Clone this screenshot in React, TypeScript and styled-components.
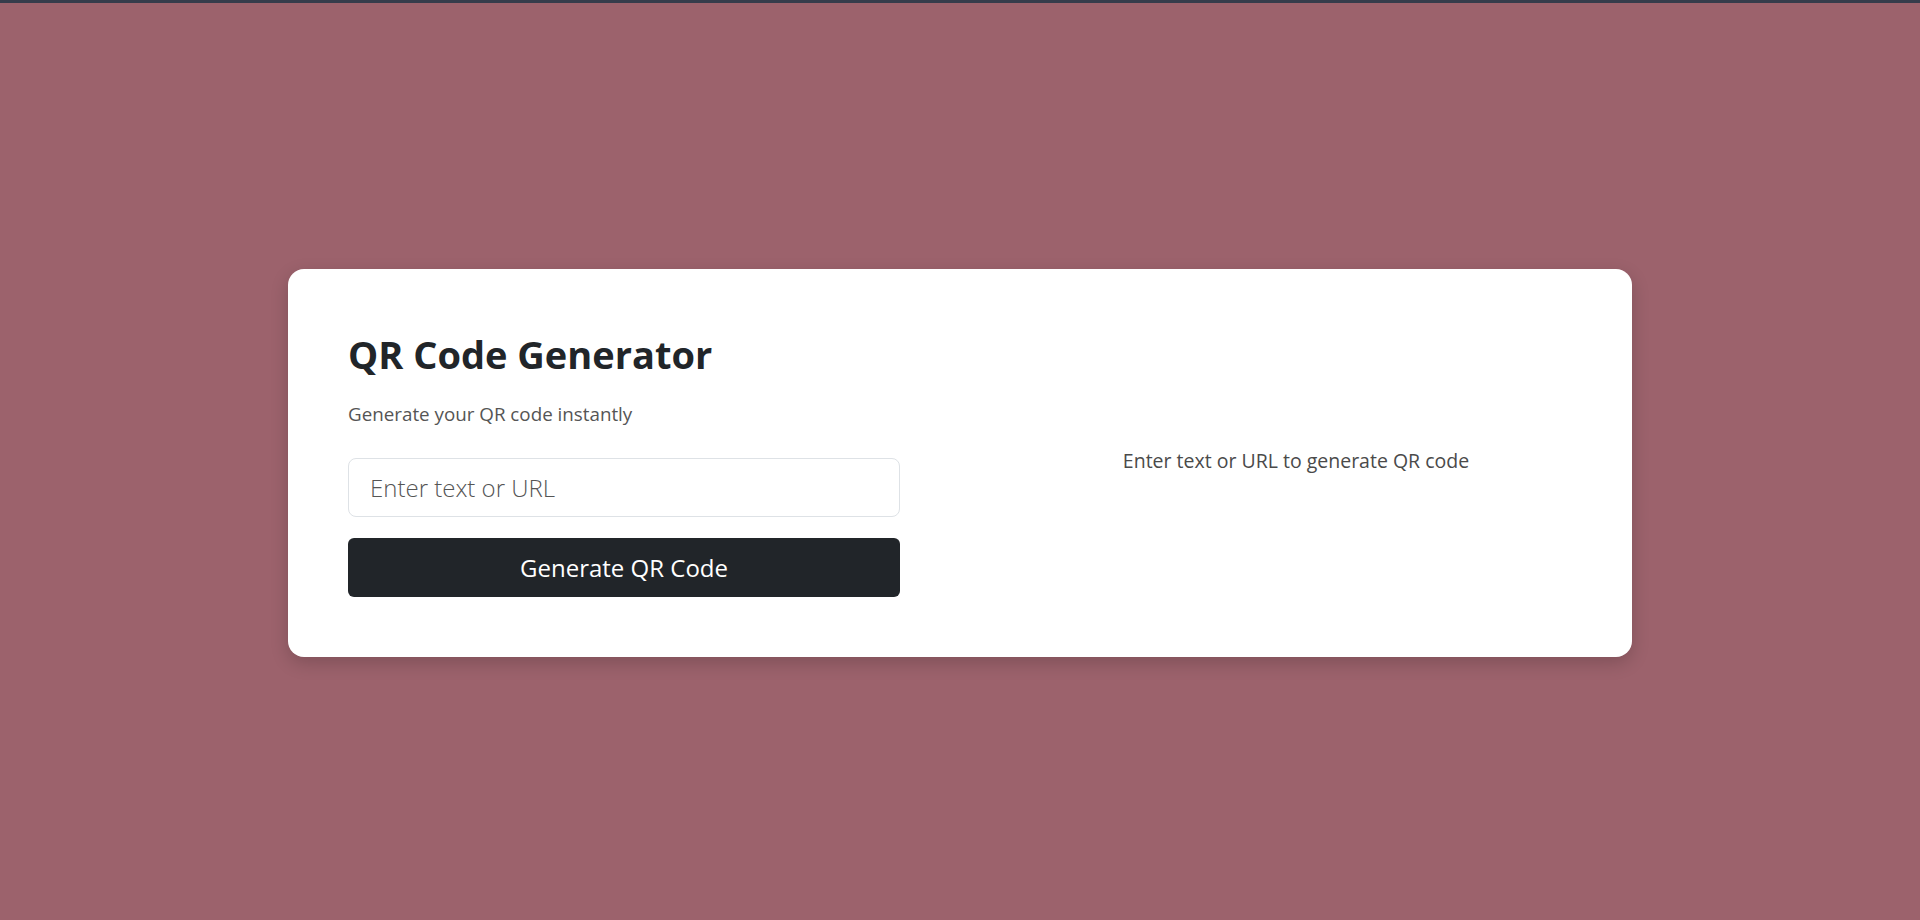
import React, { useState, FormEvent } from 'react';
import styled, { createGlobalStyle } from 'styled-components';

const GlobalStyle = createGlobalStyle`
    * {
        box-sizing: border-box;
    }
    html, body {
        margin: 0;
        padding: 0;
        height: 100%;
        background: #9c626c;
        font-family: "Open Sans", "Noto Sans", sans-serif;
    }
`;

const Page = styled.div`
    display: flex;
    flex-direction: column;
    height: 100vh;
`;

const TopBar = styled.div`
    height: 3px;
    background: #363c4b;
    flex-shrink: 0;
`;

const Main = styled.main`
    flex: 1;
    display: flex;
    align-items: center;
    justify-content: center;
    padding-top: 3px;
`;

const Card = styled.section`
    width: 70%;
    background: #ffffff;
    border-radius: 16px;
    padding: 60px;
    box-shadow: 0 6px 18px rgba(0, 0, 0, 0.18);
    display: grid;
    grid-template-columns: 1fr 1fr;
    column-gap: 120px;
`;

const LeftColumn = styled.div`
    display: flex;
    flex-direction: column;
`;

const Title = styled.h1`
    margin: 2.5px 0 0;
    font-size: 38px;
    line-height: 1.2;
    font-weight: 700;
    color: #212529;
`;

const Subtitle = styled.p`
    margin: 23px 0 29.5px;
    font-size: 18.8px;
    line-height: 1.5;
    color: #555555;
`;

const Form = styled.form<{
    onSubmit: (e: FormEvent<HTMLFormElement>) => void;
    children: React.ReactNode;
}>`
    display: flex;
    flex-direction: column;
    gap: 21px;
`;

const TextInput = styled.input.attrs({ type: 'text' })`
    height: 59px;
    padding: 0 21px;
    border: 1px solid #dee2e6;
    border-radius: 8px;
    font-family: inherit;
    font-size: 24px;
    font-weight: 300;
    color: #212529;
    outline: none;

    &::placeholder {
        color: #555555;
    }
`;

const SubmitButton = styled.button`
    height: 59px;
    border: none;
    border-radius: 6px;
    background: #212529;
    color: #ffffff;
    font-family: inherit;
    font-size: 24px;
    font-weight: 400;
    cursor: pointer;
`;

const Preview = styled.div`
    display: flex;
    align-items: center;
    justify-content: center;
`;

const PreviewHint = styled.p`
    margin: 0 0 5px;
    font-size: 19.5px;
    color: #4a4a4a;
`;

const App: React.FC = () => {
    const [text, setText] = useState('');

    const handleSubmit = (e: FormEvent<HTMLFormElement>) => {
        e.preventDefault();
    };

    return (
        <>
            <GlobalStyle />
            <Page>
                <TopBar />
                <Main>
                    <Card>
                        <LeftColumn>
                            <Title>QR Code Generator</Title>
                            <Subtitle>Generate your QR code instantly</Subtitle>
                            <Form onSubmit={handleSubmit}>
                                <TextInput
                                    value={text}
                                    onChange={(e: React.ChangeEvent<HTMLInputElement>) => setText(e.target.value)}
                                    placeholder="Enter text or URL"
                                />
                                <SubmitButton type="submit">Generate QR Code</SubmitButton>
                            </Form>
                        </LeftColumn>
                        <Preview>
                            <PreviewHint>Enter text or URL to generate QR code</PreviewHint>
                        </Preview>
                    </Card>
                </Main>
            </Page>
        </>
    );
};

export default App;
